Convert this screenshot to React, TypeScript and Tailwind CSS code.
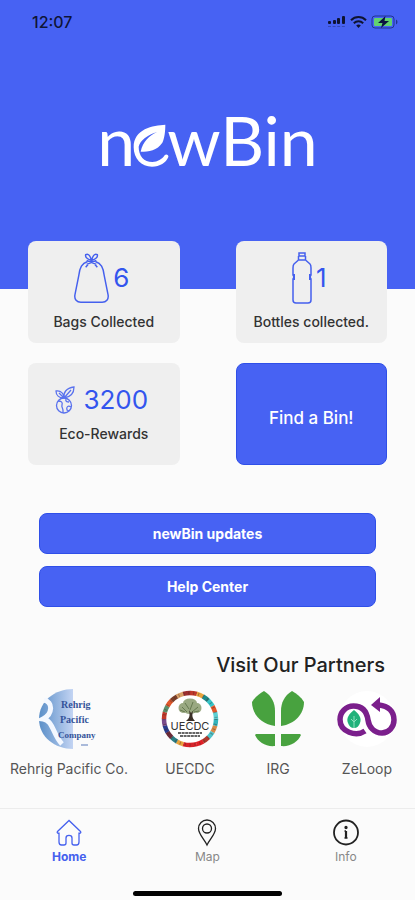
import type { ReactNode } from "react";

const RING_COLORS = [
  "#c0392b", "#e8a33d", "#1f8a8a", "#35c5c9", "#e2582c", "#5fd0d3",
  "#35b5bd", "#d98a4a", "#4fc3c9", "#b03a2e", "#e01f26", "#d8232a",
  "#d8232a", "#e8a33d", "#2a7f86", "#6b2b3a", "#273a8c", "#7a4b8c",
  "#c0392b", "#5a8f6b", "#e2582c", "#7b3f2a", "#d9a066", "#9c2f2f",
];

function StatusBar() {
  return (
    <div className="flex h-11 items-center justify-between pl-8 pr-4 text-black/80">
      <span className="text-base font-medium">12:07</span>
      <div className="flex items-center gap-1">
        <svg width="18" height="12" viewBox="0 0 18 12" fill="currentColor" aria-hidden="true">
          <rect x="0" y="5" width="3" height="3" rx="1" />
          <rect x="5" y="4" width="3" height="4" rx="1" />
          <rect x="9" y="2" width="3" height="6" rx="1" />
          <rect x="14" y="0" width="3" height="8" rx="1" />
          <path d="M0 10.5h17" stroke="currentColor" strokeDasharray="3 1.6" opacity="0.3" />
        </svg>
        <svg width="17" height="12" viewBox="0 0 17 12" fill="none" stroke="currentColor" strokeWidth="2" aria-hidden="true">
          <path d="M1 4.2C5.200 0 11.800 0 16 4.200" />
          <path d="M3.800 7.200c2.700-2.600 6.700-2.600 9.400 0" />
          <path d="M6.200 9.400 8.500 12l2.300-2.600c-1.300-1.100-3.300-1.100-4.600 0Z" fill="currentColor" stroke="none" />
        </svg>
        <svg width="28" height="14" viewBox="0 0 28 14" aria-hidden="true">
          <rect x="1" y="1" width="22" height="12" rx="3" fill="none" stroke="#20348f" />
          <rect x="3" y="3" width="18" height="8" rx="1" fill="#62d26f" />
          <path d="M14.500 1 7 8h4.500L10 13l8-7h-4.500Z" fill="#0b1440" />
          <path d="M25 4.500v5c2-1 2-4 0-5Z" fill="#20348f" />
        </svg>
      </div>
    </div>
  );
}

function Wordmark() {
  return (
    <h1
      className="flex items-baseline justify-center font-[Lato,sans-serif] text-[68px] leading-[80px] text-white"
      aria-label="newBin"
    >
      <span>n</span>
      <svg width="36" height="44" viewBox="0 0 108 132" className="-mx-0.5 translate-y-0.5" fill="#fff" aria-hidden="true">
        <path d="M97 2C60 4 2 14 2 70c0 34 23 58 55 58 24 0 42-12 49-29 2-6-7-10-11-5-8 12-21 20-37 20-25 0-41-18-41-46C21 50 42 34 72 24 48 36 30 52 23 83c24 0 50-4 65-27 7-14 9-36 9-54Z" />
      </svg>
      <span>wBin</span>
    </h1>
  );
}

function BagIcon() {
  return (
    <svg width="35" height="52" viewBox="0 0 36 52" fill="none" stroke="#4560ee" strokeWidth="1.500" aria-hidden="true">
      <path d="M14 9C8 11 6 15 5 23L1 43c-1 5 2 8 6 8h22c4 0 7-3 6-8l-4-20c-1-8-3-12-9-14" />
      <path d="M18 8c-3-1-7-2-6-6 3-2 5 2 6 6 1-4 3-8 6-6 1 4-3 5-6 6ZM18 8l-6 7M18 8l6 7M13 8l10 4M23 8l-10 4" />
    </svg>
  );
}

function BottleIcon() {
  return (
    <svg width="20" height="52" viewBox="0 0 20 52" fill="none" stroke="#4560ee" strokeWidth="1.500" aria-hidden="true">
      <path d="M7 1h6v3H7ZM6.500 4v4L2 12c-1 1-1 2-1 4v7l1 2-1 2v21c0 2 1 3 3 3h12c2 0 3-1 3-3V27l-1-2 1-2v-7c0-2 0-3-1-4l-4.500-4V4M7 8h6" />
      <path d="M2 22v6M18 22v6" strokeWidth="2" />
    </svg>
  );
}

function SproutGlobeIcon() {
  return (
    <svg width="20" height="28" viewBox="0 0 20 28" className="mr-1" fill="none" stroke="#5a72ee" strokeWidth="1.300" aria-hidden="true">
      <circle cx="9" cy="19.500" r="7.500" />
      <path d="M9 12C8 7 11 2 19 1c0 6-3 10-10 11ZM9 12C9 8 6 4 1 5c0 4 3 7 8 7ZM9 12l7-8M9 12 4 7" />
      <path d="M3 15c3 0 5 1 4 4s2 3 1 8M11 13c-1 3 2 3 3 3M16 21c-3-2-5 0-4 3l2 1" />
    </svg>
  );
}

function RehrigLogo() {
  return (
    <svg width="60" height="62" viewBox="0 0 60 62" aria-hidden="true">
      <defs>
        <linearGradient id="rehrig" x1="0" x2="1">
          <stop offset="0" stopColor="#5b8fc8" />
          <stop offset="1" stopColor="#c3d4f3" />
        </linearGradient>
      </defs>
      <path d="M34 1v60C16 61 0 49 0 31S16 1 34 1Z" fill="url(#rehrig)" />
      <path d="M5 12c9 2 9 14-1 19 10 1 10 16 19 25" fill="none" stroke="#f4f8ff" strokeWidth="5" />
      <path d="M1 31h5" stroke="#f4f8ff" strokeWidth="2" />
      <g fill="#34539a" fontFamily="Liberation Serif, serif" fontWeight="700" fontSize="10">
        <text x="22" y="20">Rehrig</text>
        <text x="21" y="35">Pacific</text>
        <text x="19" y="50" fontSize="9">Company</text>
      </g>
      <path d="M42 57h7" stroke="#8fa5cf" strokeWidth="1.500" />
    </svg>
  );
}

function UecdcLogo() {
  return (
    <svg width="58" height="58" viewBox="0 0 58 58" aria-hidden="true">
      <circle cx="29" cy="29" r="28" fill="#fff" />
      {RING_COLORS.map((color, i) => (
        <circle
          key={i}
          cx="29"
          cy="29"
          r="26"
          fill="none"
          stroke={color}
          strokeWidth="4.500"
          pathLength="24"
          strokeDasharray="1.050 22.950"
          transform={`rotate(${i * 15 - 90} 29 29)`}
        />
      ))}
      <circle cx="29" cy="29" r="26" fill="none" stroke="#4a2b22" strokeWidth="3" strokeDasharray="1 4" opacity="0.400" />
      <g fill="#9aa982">
        <ellipse cx="22" cy="18" rx="4.500" ry="5" />
        <ellipse cx="29" cy="13" rx="7" ry="4.500" />
        <ellipse cx="36" cy="18" rx="4.500" ry="5" />
        <ellipse cx="29" cy="20" rx="7" ry="4" />
      </g>
      <path d="m21 17 5 5m6-10-3 8m8-3-6 5m-7-9 4 6M19 20l5 2M38 21l-5 1" stroke="#667a50" />
      <path d="M28 20c1 5 1 8-3 11h9c-3-3-3-6-2-10l-2 2Z" fill="#3b3028" />
      <text x="29" y="40" textAnchor="middle" fontFamily="Inter, sans-serif" fontSize="11" fill="#333">UECDC</text>
      <path d="M17 43h24M19 46h20" stroke="#333" strokeWidth="1.600" strokeDasharray="3 0.600" />
    </svg>
  );
}

function IrgLogo() {
  return (
    <svg width="52" height="56" viewBox="0 0 52 56" fill="#48a23f" aria-hidden="true">
      <path d="M12 0c8 5 11 12 11 20v15C9 33 0 23 0 11 3 6 7 3 12 0Z" />
      <path d="M40 0c-8 5-11 12-11 20v15c14-2 23-12 23-24-3-5-7-8-12-11Z" />
      <path d="M4 43h19v12C14 56 6 51 3 44ZM48 43H29v12c9 1 17-4 20-11Z" />
    </svg>
  );
}

function ZeLoopLogo() {
  return (
    <svg width="60" height="56" viewBox="0 0 60 56" aria-hidden="true">
      <circle cx="30" cy="28" r="28" fill="#fff" />
      <path
        d="M28 40C19 46 3 41 3 28.500A13.500 13.500 0 0 1 16.500 15C27 15 30 22 31 29S37 42 45 42A12.500 13 0 0 0 57 29C57 20 51 15 42 14"
        fill="none"
        stroke="#7b1f8c"
        strokeWidth="5.500"
      />
      <path d="M43 6v15l-9-7Z" fill="#7b1f8c" />
      <path d="M17 19c5 4 8 8 6 13-1 3-3 5-6 5s-5-2-6-5c-2-5 1-9 6-13Z" fill="#20b27a" />
      <path d="M17 25v12M17 31l3-3M17 31l-3-3" stroke="#8ee0bd" />
    </svg>
  );
}

const PARTNERS = [
  { name: "Rehrig Pacific Co.", logo: <RehrigLogo /> },
  { name: "UECDC", logo: <UecdcLogo /> },
  { name: "IRG", logo: <IrgLogo /> },
  { name: "ZeLoop", logo: <ZeLoopLogo /> },
];

const TABS = [
  {
    label: "Home",
    active: true,
    icon: (
      <path d="M13 1.500 1.500 12.500c-.8 1 0 2 1.500 1.700V23c0 2 1 3 2.500 3H8c1.500 0 2-1 2-2v-5c0-3.500 6-3.500 6 0v5c0 1 .5 2 2 2h2.500c1.500 0 2.500-1 2.500-3v-8.800c1.500.3 2.300-.7 1.500-1.700Z" />
    ),
  },
  {
    label: "Map",
    active: false,
    icon: (
      <>
        <path d="M13 26C10 20 4.500 15 4.500 9.500a8.500 8.500 0 0 1 17 0C21.500 15 16 20 13 26Z" />
        <circle cx="13" cy="9.500" r="4.500" />
      </>
    ),
  },
  {
    label: "Info",
    active: false,
    icon: (
      <>
        <circle cx="13" cy="13.500" r="12" strokeWidth="1.800" />
        <path d="M13 12v7" strokeWidth="2.200" />
        <path d="M11.500 12H13M11.500 19h3" />
        <circle cx="13" cy="8.500" r="1" fill="currentColor" />
      </>
    ),
  },
];

function StatCard({ icon, value, label }: { icon: ReactNode; value: string; label: string }) {
  return (
    <div className="flex h-[102px] flex-col items-center justify-center rounded-lg bg-[#efefef]">
      <div className="flex items-center gap-1 pr-1 text-[26px] leading-8 text-[#3355ee]">
        {icon}
        <span>{value}</span>
      </div>
      <div className="mt-2 text-sm font-medium leading-5 text-[#333]">{label}</div>
    </div>
  );
}

export default function App() {
  return (
    <div className="flex min-h-screen flex-col bg-[#fbfbfb] font-[Inter,sans-serif]">
      <header className="h-[289px] bg-[#4762f3]">
        <StatusBar />
        <div className="mt-14">
          <Wordmark />
        </div>
      </header>

      <main className="flex grow flex-col">
        <section className="-mt-12 grid grid-cols-2 gap-x-14 gap-y-5 px-7">
          <StatCard icon={<BagIcon />} value="6" label="Bags Collected" />
          <StatCard icon={<BottleIcon />} value="1" label="Bottles collected." />
          <StatCard icon={<SproutGlobeIcon />} value="3200" label="Eco-Rewards" />
          <button type="button" className="h-[102px] rounded-lg border border-[#2f4fe8] bg-[#4762f3] pt-2.5 text-[17px] font-medium text-white">
            Find a Bin!
          </button>
        </section>

        <section className="mt-12 flex flex-col gap-3 px-[39px] text-sm font-bold text-white">
          <button type="button" className="h-[41px] rounded-lg border border-[#2f4fe8] bg-[#4762f3]">
            newBin updates
          </button>
          <button type="button" className="h-[41px] rounded-lg border border-[#2f4fe8] bg-[#4762f3]">
            Help Center
          </button>
        </section>

        <section className="mt-11">
          <h2 className="pr-[30px] text-right text-xl font-medium leading-7 text-[#222]">Visit Our Partners</h2>
          <ul className="mt-2 flex justify-between pl-2.5 pr-[18px]">
            {PARTNERS.map((p) => (
              <li key={p.name} className="flex flex-col items-center">
                <div className="flex h-16 items-center">{p.logo}</div>
                <span className="mt-2 text-sm leading-5 text-[#555]">{p.name}</span>
              </li>
            ))}
          </ul>
        </section>
      </main>

      <footer className="border-t border-[#ececec]">
        <nav className="grid h-[82px] grid-cols-3 pt-2.5">
          {TABS.map((tab) => (
            <a
              key={tab.label}
              href={`#${tab.label.toLowerCase()}`}
              className={`flex flex-col items-center gap-0.5 ${tab.active ? "text-[#4560ee]" : "text-[#222]"}`}
            >
              <svg width="26" height="28" viewBox="0 0 26 28" fill="none" stroke="currentColor" strokeWidth="1.300" aria-hidden="true">
                {tab.icon}
              </svg>
              <span className={`text-xs leading-4 ${tab.active ? "font-bold" : "text-[#888]"}`}>{tab.label}</span>
            </a>
          ))}
        </nav>
        <div className="mx-auto mb-1 h-[5px] w-[149px] rounded-full bg-black" />
      </footer>
    </div>
  );
}
